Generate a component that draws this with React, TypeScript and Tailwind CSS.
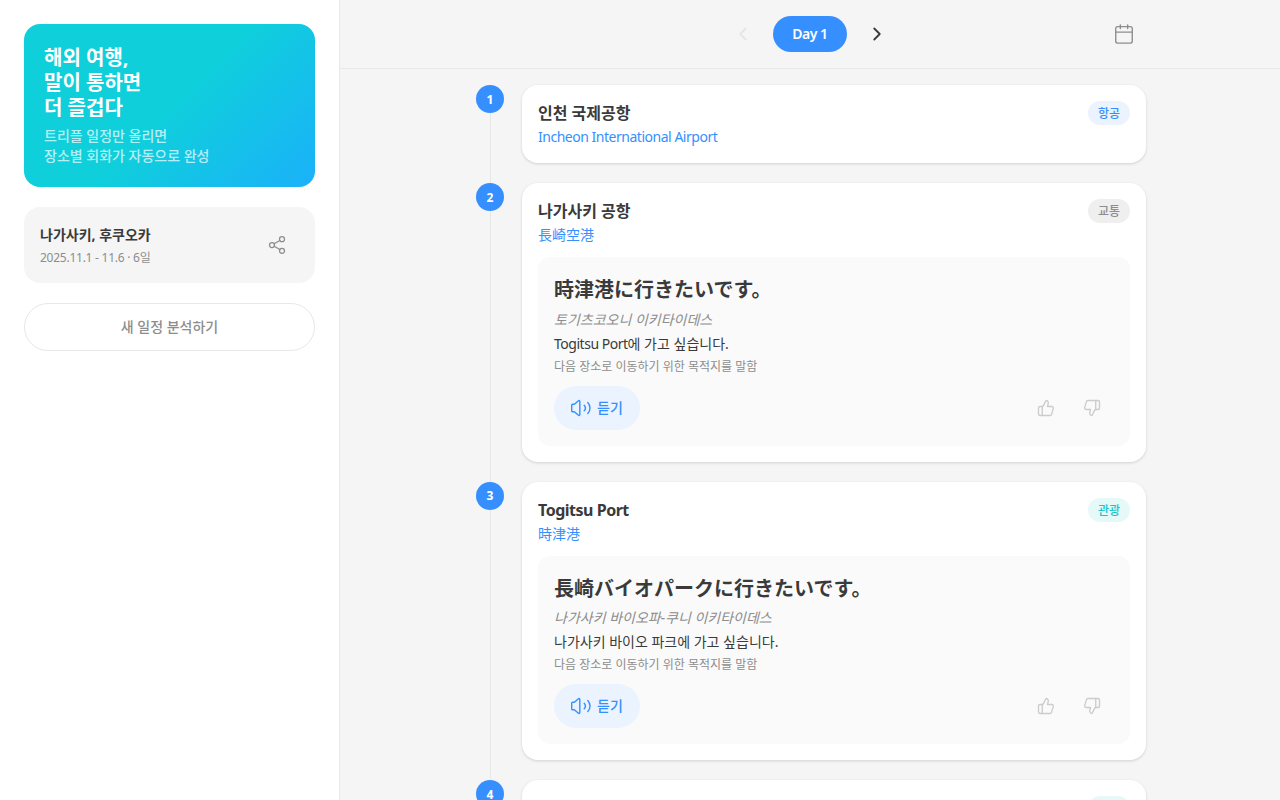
import React, { useState } from "react";
import {
  Calendar,
  ChevronLeft,
  ChevronRight,
  Share2,
  ThumbsDown,
  ThumbsUp,
} from "lucide-react";

type Category = "flight" | "transit" | "sight";

interface Phrase {
  text: string;
  reading: string;
  meaning: string;
  note: string;
}

interface Place {
  name: string;
  localName: string;
  category: Category;
  phrase?: Phrase;
}

const categoryLabel: Record<Category, string> = {
  flight: "항공",
  transit: "교통",
  sight: "관광",
};

const categoryStyle: Record<Category, string> = {
  flight: "bg-[#ebf3ff] text-[#368fff]",
  transit: "bg-[#efefef] text-[#8d8d8d]",
  sight: "bg-[#e5f9f8] text-[#15c5ca]",
};

const places: Place[] = [
  {
    name: "인천 국제공항",
    localName: "Incheon International Airport",
    category: "flight",
  },
  {
    name: "나가사키 공항",
    localName: "長崎空港",
    category: "transit",
    phrase: {
      text: "時津港に行きたいです。",
      reading: "토기츠코오니 이키타이데스",
      meaning: "Togitsu Port에 가고 싶습니다.",
      note: "다음 장소로 이동하기 위한 목적지를 말함",
    },
  },
  {
    name: "Togitsu Port",
    localName: "時津港",
    category: "sight",
    phrase: {
      text: "長崎バイオパークに行きたいです。",
      reading: "나가사키 바이오파-쿠니 이키타이데스",
      meaning: "나가사키 바이오 파크에 가고 싶습니다.",
      note: "다음 장소로 이동하기 위한 목적지를 말함",
    },
  },
  {
    name: "나가사키 바이오 파크",
    localName: "長崎バイオパーク",
    category: "sight",
  },
];

// Latin runs are set a little tighter than Hangul and Kanji
function Mixed({ text }: { text: string }) {
  return (
    <>
      {text.split(/([A-Za-z][A-Za-z ]*[A-Za-z])/).map((part, i) =>
        i % 2 === 1 ? (
          <span key={i} className="tracking-[-0.48px]">
            {part}
          </span>
        ) : (
          part
        )
      )}
    </>
  );
}

function SpeakerIcon() {
  return (
    <svg
      width="22"
      height="22"
      viewBox="0 0 22 22"
      fill="none"
      stroke="currentColor"
      strokeWidth="1.4"
      strokeLinecap="round"
      strokeLinejoin="round"
    >
      <path d="M1.7 8.3a1 1 0 0 1 1-1h1.6l4.2-3.6a.8.8 0 0 1 1.3.6v13.4a.8.8 0 0 1-1.3.6l-4.2-3.6H2.7a1 1 0 0 1-1-1z" />
      <path d="M14.2 8.2a4.2 4.2 0 0 1 0 5.6" />
      <path d="M17.8 5.4a8.2 8.2 0 0 1 0 11.2" />
    </svg>
  );
}

function PhraseBox({ phrase }: { phrase: Phrase }) {
  return (
    <div className="mt-3 rounded-xl bg-[#fafafa] p-4">
      <p className="pt-px text-xl leading-8 font-bold" lang="ja">
        {phrase.text}
      </p>
      <p className="mt-[3.5px] text-sm leading-5 text-[#8d8d8d] italic">
        {phrase.reading}
      </p>
      <p className="mt-1 text-sm leading-5">
        <Mixed text={phrase.meaning} />
      </p>
      <p className="mt-1 text-xs leading-[18px] text-[#8d8d8d]">{phrase.note}</p>
      <div className="mt-2.5 flex items-center justify-between">
        <button className="flex h-11 w-[86px] items-center gap-[5px] rounded-full bg-[#ebf3ff] px-4 text-sm font-medium whitespace-nowrap text-[#368fff]">
          <SpeakerIcon />
          듣기
        </button>
        <div className="flex gap-0.5 text-[#cccccc]">
          <button
            className="flex size-11 items-center justify-center"
            aria-label="좋아요"
          >
            <ThumbsUp size={18} strokeWidth={1.8} />
          </button>
          <button
            className="flex size-11 items-center justify-center"
            aria-label="싫어요"
          >
            <ThumbsDown size={18} strokeWidth={1.8} />
          </button>
        </div>
      </div>
    </div>
  );
}

function PlaceItem({ place, index }: { place: Place; index: number }) {
  return (
    <li className="flex gap-4">
      <div className="flex w-8 flex-col items-center">
        <span className="flex size-7 shrink-0 items-center justify-center rounded-full bg-[#368fff] pt-px text-xs font-bold text-white">
          {index + 1}
        </span>
        <span className="ml-px w-px flex-1 bg-[#e8e8e8]" />
      </div>
      <div className="min-w-0 flex-1 pb-5">
        <article className="rounded-2xl bg-white p-4 shadow-[0_1px_3px_rgba(0,0,0,0.15)]">
          <div className="flex items-start justify-between">
            <div>
              <h3 className="text-base leading-6 font-bold">
                <Mixed text={place.name} />
              </h3>
              <p
                className="mt-0.5 text-sm leading-5 text-[#368fff]"
                lang="ja"
              >
                <Mixed text={place.localName} />
              </p>
            </div>
            <span
              className={`flex h-6 items-center rounded-full px-2.5 pt-0.5 text-xs font-medium ${
                categoryStyle[place.category]
              }`}
            >
              {categoryLabel[place.category]}
            </span>
          </div>
          {place.phrase && <PhraseBox phrase={place.phrase} />}
        </article>
      </div>
    </li>
  );
}

function Sidebar() {
  return (
    <aside className="flex w-[340px] shrink-0 flex-col gap-5 border-r border-[#e8e8e8] bg-white p-6">
      <div className="rounded-2xl bg-[linear-gradient(135deg,#0fcfdb_0%,#0fcfdb_50%,#1bb1fa_100%)] p-5 text-white">
        <h1 className="pt-px text-xl leading-[25px] font-bold">
          해외 여행,
          <br />
          말이 통하면
          <br />더 즐겁다
        </h1>
        <p className="mt-1.5 pb-px text-sm leading-5 font-medium text-white/70">
          트리플 일정만 올리면
          <br />
          장소별 회화가 자동으로 완성
        </p>
      </div>
      <div className="flex h-19 items-center justify-between rounded-2xl bg-[#f5f5f5] px-4">
        <div className="pt-0.5">
          <h2 className="text-sm leading-5 font-bold">나가사키, 후쿠오카</h2>
          <p className="mt-[3px] text-xs leading-5 tracking-[-0.25px] text-[#8d8d8d]">
            2025.11.1 - 11.6 · 6일
          </p>
        </div>
        <button
          className="flex size-11 items-center justify-center text-[#8d8d8d]"
          aria-label="공유"
        >
          <Share2 size={20} strokeWidth={1.5} />
        </button>
      </div>
      <button className="h-12 rounded-full border border-[#e8e8e8] text-sm font-medium text-[#8d8d8d]">
        새 일정 분석하기
      </button>
    </aside>
  );
}

export default function App() {
  const [day, setDay] = useState(1);

  return (
    <div className="flex h-screen overflow-hidden bg-[#f5f5f5] font-['Noto_Sans','Noto_Sans_CJK_KR',sans-serif] text-[#3a3a3a]">
      <Sidebar />
      <main className="flex min-w-0 flex-1 flex-col">
        <header className="h-[69px] shrink-0 border-b border-[#e8e8e8] py-3">
          <div className="mx-auto grid max-w-2xl grid-cols-[1fr_auto_1fr] items-center">
            <span />
            <div className="flex items-center gap-2">
              <button
                className="flex size-11 items-center justify-center disabled:text-[#e5e5e5]"
                disabled={day === 1}
                onClick={() => setDay(day - 1)}
                aria-label="이전"
              >
                <ChevronLeft size={22} strokeWidth={2} />
              </button>
              <span className="flex h-9 w-[74px] items-center justify-center rounded-full bg-[#368fff] text-sm font-semibold tracking-[-0.5px] text-white">
                Day {day}
              </span>
              <button
                className="flex size-11 items-center justify-center"
                onClick={() => setDay(day + 1)}
                aria-label="다음"
              >
                <ChevronRight size={22} strokeWidth={2} />
              </button>
            </div>
            <button
              className="flex size-11 items-center justify-center justify-self-end text-[#8d8d8d]"
              aria-label="달력"
            >
              <Calendar size={22} strokeWidth={1.5} />
            </button>
          </div>
        </header>
        <div className="min-h-0 flex-1 overflow-hidden pt-4">
          <ul className="mx-auto max-w-2xl">
            {places.map((place, i) => (
              <PlaceItem key={place.name} place={place} index={i} />
            ))}
          </ul>
        </div>
      </main>
    </div>
  );
}
